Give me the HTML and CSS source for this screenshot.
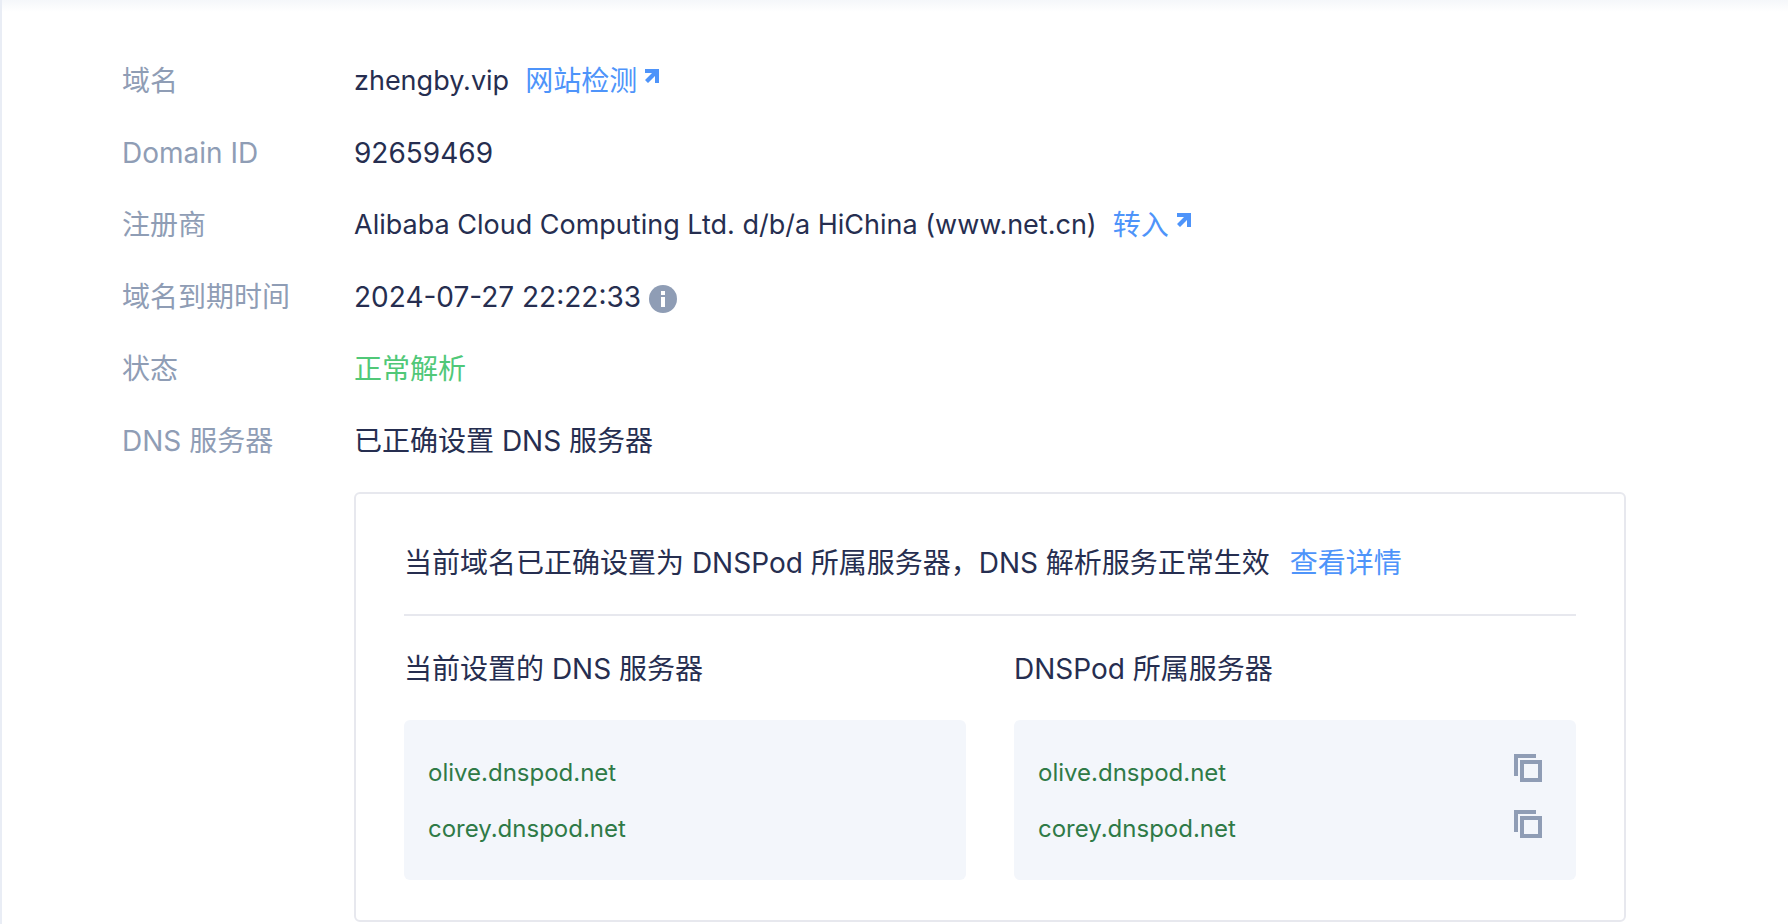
FILE: index.html
```
<!DOCTYPE html>
<html lang="zh-CN">
<head>
    <meta charset="UTF-8">
    <meta name="viewport" content="width=device-width, initial-scale=1.0">
    <title>zhengby.vip - 域名信息</title>
    <link rel="stylesheet" href="styles.css">
</head>
<body>
    <main class="domain-panel">
        <dl class="info-list">
            <dt>域名</dt>
            <dd>
                <span class="name">zhengby.vip</span>
                <a class="link" href="#check">网站检测<svg class="icon-jump" viewBox="0 0 14 14" aria-hidden="true"><path d="M0 0H14V14H10V7L3 14L0 11L7 4H0Z"/></svg></a>
            </dd>

            <dt>Domain ID</dt>
            <dd>92659469</dd>

            <dt>注册商</dt>
            <dd>
                <span class="name">Alibaba Cloud Computing Ltd. d/b/a HiChina (www.net.cn)</span>
                <a class="link" href="#transfer">转入<svg class="icon-jump" viewBox="0 0 14 14" aria-hidden="true"><path d="M0 0H14V14H10V7L3 14L0 11L7 4H0Z"/></svg></a>
            </dd>

            <dt>域名到期时间</dt>
            <dd>
                <span>2024-07-27 22:22:33</span>
                <button class="info-button" type="button" aria-label="到期说明">
                    <svg class="icon-info" viewBox="0 0 28 28"><circle cx="14" cy="14" r="14"/><path fill="#fff" d="M12 6h4v4h-4zM12 12h4v10h-4z"/></svg>
                </button>
            </dd>

            <dt>状态</dt>
            <dd class="status-ok">正常解析</dd>

            <dt>DNS 服务器</dt>
            <dd>已正确设置 DNS 服务器</dd>
        </dl>

        <section class="dns-card">
            <p class="dns-summary">
                <span>当前域名已正确设置为 DNSPod 所属服务器，DNS 解析服务正常生效</span>
                <a class="link" href="#detail">查看详情</a>
            </p>
            <div class="dns-columns">
                <div>
                    <h2>当前设置的 DNS 服务器</h2>
                    <ul class="server-list">
                        <li>olive.dnspod.net</li>
                        <li>corey.dnspod.net</li>
                    </ul>
                </div>
                <div>
                    <h2>DNSPod 所属服务器</h2>
                    <ul class="server-list">
                        <li>olive.dnspod.net
                            <button class="copy-button" type="button" aria-label="复制 olive.dnspod.net">
                                <svg class="icon-copy" viewBox="0 0 28 28"><path d="M0 0H22V4H4V22H0ZM6 6H28V28H6ZM10 10V24H24V10Z" fill-rule="evenodd"/></svg>
                            </button>
                        </li>
                        <li>corey.dnspod.net
                            <button class="copy-button" type="button" aria-label="复制 corey.dnspod.net">
                                <svg class="icon-copy" viewBox="0 0 28 28"><path d="M0 0H22V4H4V22H0ZM6 6H28V28H6ZM10 10V24H24V10Z" fill-rule="evenodd"/></svg>
                            </button>
                        </li>
                    </ul>
                </div>
            </div>
        </section>
    </main>
</body>
</html>
```
FILE: styles.css
```
* {
    box-sizing: border-box;
}
body {
    margin: 0;
    font-family: Inter, "Noto Sans CJK SC", sans-serif;
    font-size: 28px;
    font-weight: 380;
    line-height: 42px;
    color: #262e50;
    background-color: #fff;
}
.domain-panel {
    min-height: 100vh;
    padding: 60px 162px 0 120px;
    border-left: 2px solid #e9edf5;
    background: linear-gradient(#f5f7fa, #fff 12px);
}
.info-list {
    display: grid;
    grid-template-columns: 232px 1fr;
    row-gap: 30px;
    margin: 0;
}
dt {
    color: #8f9db5;
}
dd {
    display: flex;
    align-items: center;
    gap: 16px;
    margin: 0;
}
.name {
    font-size: 27px;
}
.link {
    color: #4e94fa;
    text-decoration: none;
}
.link:hover {
    text-decoration: underline;
}
.icon-jump {
    width: 14px;
    height: 14px;
    margin-left: 8px;
    vertical-align: 8px;
    fill: currentColor;
}
.info-button,
.copy-button {
    display: block;
    padding: 0;
    border: 0;
    background: none;
    color: #8f9db5;
    cursor: pointer;
}
.info-button {
    margin: 4px 0 0 -8px;
}
.icon-info,
.icon-copy {
    display: block;
    width: 28px;
    height: 28px;
    fill: currentColor;
}
.status-ok {
    color: #50c878;
}
.dns-card {
    margin: 30px 0 0 232px;
    padding: 48px 48px 40px;
    border: 2px solid #e7e8ee;
    border-radius: 6px;
}
.dns-summary {
    display: flex;
    gap: 20px;
    margin: 0;
    padding-bottom: 30px;
    border-bottom: 2px solid #e7e8ee;
}
.dns-columns {
    display: grid;
    grid-template-columns: 1fr 1fr;
    gap: 48px;
    padding-top: 32px;
}
h2 {
    margin: 0 0 30px;
    font-size: 28px;
    font-weight: 380;
}
.server-list {
    margin: 0;
    padding: 25px 34px 23px 24px;
    border-radius: 6px;
    list-style: none;
    font-size: 24px;
    line-height: 56px;
    color: #2f7a47;
    background-color: #f3f6fb;
}
.server-list li {
    display: flex;
    justify-content: space-between;
}
.copy-button {
    margin-top: 9px;
    align-self: flex-start;
}
```
